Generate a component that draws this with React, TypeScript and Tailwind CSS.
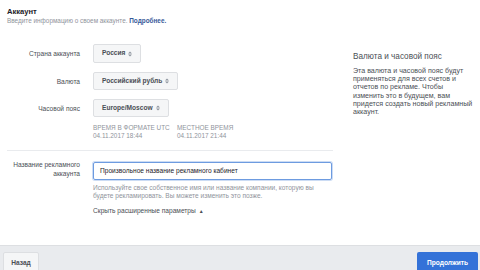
import React from 'react';

function Caret() {
  return (
    <svg width="4" height="6" viewBox="0 0 4 6" className="ml-[3px] shrink-0">
      <path d="M0 2.4 L2 0.4 L4 2.4 Z" fill="#8d949e" />
      <path d="M0 3.6 L2 5.6 L4 3.6 Z" fill="#8d949e" />
    </svg>
  );
}

function Select({ label, height }: { label: string; height: string }) {
  return (
    <div
      className={`flex ${height} items-center rounded-[2px] border border-[#dddfe2] bg-[#f5f6f7] pl-[8px] pr-[8px] text-[6.6px] font-bold leading-none text-[#4b4f56]`}
    >
      {label}
      <Caret />
    </div>
  );
}

function Row({ label, children }: { label: string; children: React.ReactNode }) {
  return (
    <div className="flex items-center">
      <div className="w-[73px] shrink-0 text-right text-[6.6px] leading-[9px] text-[#4b4f56]">{label}</div>
      <div className="ml-[13px] flex">{children}</div>
    </div>
  );
}

export default function App() {
  return (
    <div
      className="flex h-[270px] w-[480px] flex-col overflow-hidden bg-white"
      style={{ fontFamily: '"Liberation Sans", Arial, sans-serif' }}
    >
      <div className="flex flex-1">
        <div className="w-[333px] shrink-0 pl-[7px] pt-[7px]">
          <div className="text-[7.6px] font-bold leading-[9px] text-[#1d2129]">Аккаунт</div>
          <div className="mt-[1px] text-[6.4px] leading-[8px] text-[#90949c]">
            Введите информацию о своем аккаунте.{' '}
            <span className="font-bold text-[#365899]">Подробнее.</span>
          </div>

          <div className="mt-[19px] flex flex-col gap-[9px]">
            <Row label="Страна аккаунта">
              <Select label="Россия" height="h-[19px]" />
            </Row>
            <Row label="Валюта">
              <Select label="Российский рубль" height="h-[18px]" />
            </Row>
            <Row label="Часовой пояс">
              <Select label="Europe/Moscow" height="h-[18px]" />
            </Row>
          </div>

          <div className="mt-[7px] ml-[86px] flex text-[6.4px] leading-[8px] text-[#90949c]">
            <div className="w-[84px]">
              <div>ВРЕМЯ В ФОРМАТЕ UTC</div>
              <div>04.11.2017 18:44</div>
            </div>
            <div>
              <div>МЕСТНОЕ ВРЕМЯ</div>
              <div>04.11.2017 21:44</div>
            </div>
          </div>

          <div className="mt-[10px] h-px bg-[#e9ebee]" />

          <div className="mt-[9px] flex items-start">
            <div className="w-[73px] shrink-0 text-right text-[6.6px] leading-[9px] text-[#4b4f56]">
              Название рекламного
              <br />
              аккаунта
            </div>
            <div className="ml-[13px] flex-1">
              <div className="mt-[2px] flex h-[18px] w-[239px] items-center rounded-[2px] border border-[#6d9be0] px-[6px] text-[6.6px] leading-none text-[#1d2129] shadow-[0_0_0_1px_rgba(109,155,224,0.35)]">
                Произвольное название рекламного кабинет
              </div>
              <div className="mt-[4px] text-[6.55px] leading-[8px] text-[#90949c]">
                Используйте свое собственное имя или название компании, которую вы
                <br />
                будете рекламировать. Вы можете изменить это позже.
              </div>
              <div className="mt-[7px] flex items-center text-[6.6px] leading-[8px] text-[#4b4f56]">
                Скрыть расширенные параметры
                <span className="ml-[3px] text-[5px]">▲</span>
              </div>
            </div>
          </div>
        </div>

        <div className="ml-[20px] pt-[52px]">
          <div className="text-[8.2px] leading-[9px] text-[#4b4f56]">Валюта и часовой пояс</div>
          <div className="mt-[6px] text-[7.1px] leading-[8.2px] text-[#4b4f56]">
            Эта валюта и часовой пояс будут
            <br />
            применяться для всех счетов и
            <br />
            отчетов по рекламе. Чтобы
            <br />
            изменить это в будущем, вам
            <br />
            придется создать новый рекламный
            <br />
            аккаунт.
          </div>
        </div>
      </div>

      <div className="flex h-[25px] shrink-0 items-start justify-between border-t border-[#dddfe2] bg-[#e9ebee] pl-[3px] pr-[2px] pt-[6px]">
        <button className="h-[22px] w-[36px] rounded-[2px] border border-[#dddfe2] bg-[#f5f6f7] text-[6.6px] font-bold text-[#4b4f56]">
          Назад
        </button>
        <button className="h-[22px] w-[61px] rounded-[2px] bg-[#3472d8] text-[6.6px] font-bold text-white">
          Продолжить
        </button>
      </div>
    </div>
  );
}
